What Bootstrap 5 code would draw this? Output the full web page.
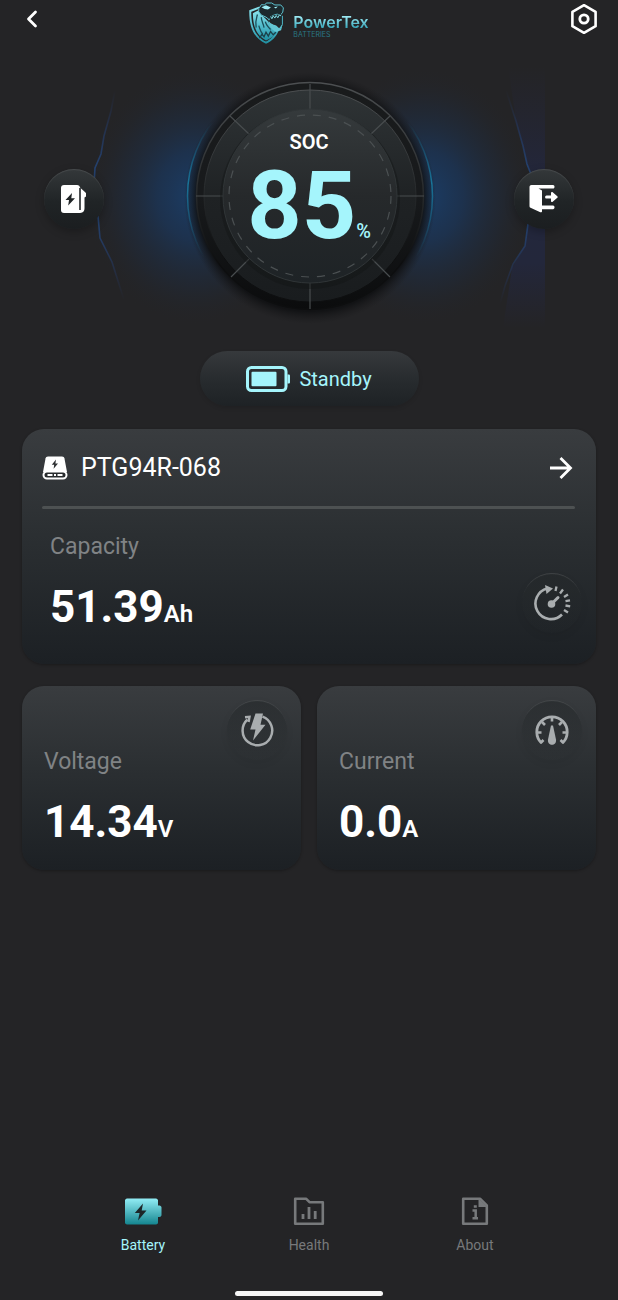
<!DOCTYPE html>
<html lang="en">
<head>
<meta charset="utf-8">
<meta name="viewport" content="width=device-width, initial-scale=1">
<title>PowerTex Batteries</title>
<link href="https://cdn.jsdelivr.net/npm/bootstrap@5.3.0/dist/css/bootstrap.min.css" rel="stylesheet">
<style>
  :root { --ice: #a5f5fc; --ink: #242426; --muted: #808385; }
  body { background: var(--ink); color: #fff; font-family: Roboto, "Noto Sans", sans-serif; }
  svg { display: block; }
  .plain { background: none; border: 0; padding: 0; color: inherit; }
  .topbar { padding: 0 12px 0 10px; height: 46px; }
  .topbar .plain { width: 44px; height: 38px; }
  .brand { padding-top: 2px; gap: 8px; color: #6cc9d6; text-decoration: none; }
  .brand-name { font: 600 16px/18px Inter, sans-serif; background: linear-gradient(#9be8f2 20%, #35a5b8 85%); -webkit-background-clip: text; background-clip: text; color: transparent; }
  .brand-sub { font: 400 7px/8px Inter, sans-serif; color: #2a7885; }
  .brand-words { padding-top: 11px; }

  .hero { height: 305px; padding: 0 44px; }
  .hero-art { position: absolute; top: 0; left: 50%; transform: translateX(-50%); z-index: -1; }
  .orb { width: 60px; height: 60px; border-radius: 50%; background: linear-gradient(#34383a, #202426 55%, #1b1e20); box-shadow: 0 3px 8px rgba(0,0,0,.25), inset 0 1px 1px rgba(255,255,255,.1); }
  .orb-soft { width: 60px; height: 60px; border-radius: 50%; flex: none; color: #a9adaf; background: linear-gradient(rgba(36,40,42,.6), rgba(36,40,42,.05)); box-shadow: inset 0 2px 1px -1px rgba(255,255,255,.13), 0 3px 8px rgba(0,0,0,.06); }
  .soc { align-self: flex-start; padding-top: 84px; }
  .soc-label { font-size: 20px; line-height: 24px; font-weight: 600; }
  .soc-value { font-size: 95px; line-height: 104px; font-weight: 700; color: var(--ice); }
  .soc-unit { font-size: 20px; font-weight: 500; color: var(--ice); }

  .status-pill { width: 219px; height: 55px; border-radius: 28px; gap: 9px; font-size: 20px; color: var(--ice); background: linear-gradient(#36393c, #282c2f 50%, #1e2225); box-shadow: 0 2px 4px rgba(0,0,0,.12); }

  .panels { padding: 23px 22px 0; }
  .panel { border-radius: 22px; background: linear-gradient(#393c3f, #2b2f32 45%, #1c2024); box-shadow: 0 1px 3px rgba(0,0,0,.3); }
  .panel-main { padding: 20px 14px 31px 20px; margin-bottom: 22px; }
  .device { height: 38px; padding-right: 7px; font-size: 25px; gap: 13px; }
  .rule { height: 3px; margin: 19px 7px 24px 0; background: #4d5152; border: 0; opacity: 1; border-radius: 2px; }
  .panel-body { padding-left: 8px; }
  .panel-grid { gap: 16px; }
  .panel-small { padding: 14px 14px 22px 22px; }
  .panel-small dl { padding-top: 48px; }
  dt { font-size: 23px; line-height: 28px; font-weight: 400; color: var(--muted); }
  dd { font-size: 44px; line-height: 52px; font-weight: 700; margin: 20px 0 0; }
  dd small { font-size: 24px; line-height: 1; font-weight: 600; }

  .tabs { padding: 0 60px; }
  .tabs a { color: #77797b; text-decoration: none; font-size: 14px; line-height: 20px; gap: 8px; }
  .tabs a.active { color: var(--ice); }
  .home-bar { width: 148px; height: 5px; border-radius: 3px; background: #f5f5f5; margin: 36px auto 4px; }
</style>
</head>
<body>
<div class="d-flex flex-column min-vh-100">
  <header class="topbar d-flex justify-content-between align-items-start">
    <button class="plain d-flex align-items-center justify-content-center" type="button" aria-label="Back">
      <svg width="12" height="18" viewBox="0 0 12 18" fill="none" stroke="#fff" stroke-width="2.8" stroke-linecap="round" stroke-linejoin="round"><path d="M9.500 2 2.500 9l7 7"/></svg>
    </button>
    <a class="brand d-flex" href="#" aria-label="PowerTex Batteries">
      <svg width="38" height="42" viewBox="26 6 112 128">
        <defs><linearGradient id="teal" x1="0" y1="0" x2="0" y2="1"><stop offset="0" stop-color="#8be3ed"/><stop offset=".6" stop-color="#49b5c6"/><stop offset="1" stop-color="#1f8fa1"/></linearGradient></defs>
        <path d="M31 31 62 20l-3 7-22 9c0 36 7 58 22 74 8 8 15 13 23 16 14-6 26-18 34-38l6 2c-8 22-22 36-40 43C46 117 30 84 31 31Z" fill="url(#teal)"/>
        <path d="M42 40 60 31c6 18 24 24 32 40 6 12 14 20 26 23-8 12-18 22-36 29-27-14-40-40-40-83Z" fill="url(#teal)"/>
        <path d="M56 44c-4 14-8 22-4 40M68 52c-2 10 6 18 8 32M60 78c4 10 4 18 12 26M80 66c2 8 8 16 16 24" fill="none" stroke="#1b4e59" stroke-width="4"/>
        <path d="m62 116 8-12 6 8 6-14 7 12 7-14 8 10 8-8" fill="none" stroke="#1b4049" stroke-width="4"/>
        <path d="m60 26 8-12 10 1 5-6 16 0 10 6 18 0 8 9-2 13-7 9-10-3-16 5-8 12-10-8-14-6-8-10Z" fill="#1c292d" stroke="#5cc3d1" stroke-width="3"/>
        <path d="m68 22 14-6 15 7-9 6-10-2Zm38 0 12-2-6 6Z" fill="#a0eef6"/>
        <path d="m92 53 10-6 26-4 4 14-4 24-12-6-16-6Z" fill="#1c2a2e"/>
        <path d="m96 50 4 7 4-9 5 7 4-8 5 7 4-8 6 2" fill="none" stroke="#83dce6" stroke-width="3"/>
        <path d="M88 58c4 14 14 16 26 20l8 8 10-12-4 18-14 5c-14-4-24-18-24-39Z" fill="#63c7d4"/>
        <path d="M132 48v26l-6 14" fill="none" stroke="#4fb6c5" stroke-width="3"/>
      </svg>
      <span class="brand-words d-flex flex-column"><span class="brand-name">PowerTex</span><span class="brand-sub">BATTERIES</span></span>
    </a>
    <button class="plain d-flex align-items-center justify-content-center" type="button" aria-label="Settings">
      <svg width="28" height="32" viewBox="0 0 28 32" fill="none" stroke="#fff"><path d="M14 2.200 25.600 8.800v14.400L14 29.800 2.400 23.200V8.800Z" stroke-width="2.600" stroke-linejoin="round"/><circle cx="14" cy="16" r="4.200" stroke-width="2.800"/></svg>
    </button>
  </header>

  <main class="flex-grow-1">
    <section class="hero position-relative z-0 overflow-hidden d-flex justify-content-between align-items-center" aria-label="State of charge">
      <svg class="hero-art" width="618" height="305" viewBox="0 0 618 305" aria-hidden="true">
        <defs>
          <radialGradient id="glow"><stop offset="0" stop-color="#1b3d66"/><stop offset=".35" stop-color="#1c3454" stop-opacity=".85"/><stop offset=".7" stop-color="#1f2b3d" stop-opacity=".45"/><stop offset="1" stop-color="#242426" stop-opacity="0"/></radialGradient>
          <radialGradient id="shade"><stop offset=".9" stop-color="#101113" stop-opacity=".9"/><stop offset="1" stop-color="#1a1a1c" stop-opacity="0"/></radialGradient>
          <linearGradient id="edge" x1="0" y1="0" x2="0" y2="1"><stop offset=".2" stop-color="#17688f" stop-opacity="0"/><stop offset=".45" stop-color="#18759a"/><stop offset=".75" stop-color="#17688f" stop-opacity="0"/></linearGradient>
          <linearGradient id="rim" x1="0" y1="0" x2="0" y2="1"><stop offset="0" stop-color="#4c4f51"/><stop offset=".5" stop-color="#26292b"/><stop offset=".8" stop-color="#0d0e0f"/></linearGradient>
          <linearGradient id="body" x1="0" y1="0" x2="0" y2="1"><stop offset="0" stop-color="#191b1c"/><stop offset=".5" stop-color="#181a1c"/><stop offset="1" stop-color="#0b0c0d"/></linearGradient>
          <linearGradient id="band" x1="0" y1="0" x2="0" y2="1"><stop offset="0" stop-color="#2f3436"/><stop offset=".5" stop-color="#1f2224"/><stop offset="1" stop-color="#191c1e"/></linearGradient>
          <linearGradient id="disc" x1="0" y1="0" x2="0" y2="1"><stop offset="0" stop-color="#353a3c"/><stop offset=".5" stop-color="#26292b"/><stop offset="1" stop-color="#1e2326"/></linearGradient>
          <linearGradient id="bolt" x1="0" y1="0" x2="0" y2="1"><stop offset="0" stop-color="#24386a" stop-opacity="0"/><stop offset=".35" stop-color="#24406c"/><stop offset=".65" stop-color="#24406c"/><stop offset="1" stop-color="#24386a" stop-opacity="0"/></linearGradient>
          <linearGradient id="haze" x1="0" y1="0" x2="0" y2="1"><stop offset="0" stop-color="#24263a" stop-opacity="0"/><stop offset=".45" stop-color="#23273d"/><stop offset=".75" stop-color="#23273b"/><stop offset="1" stop-color="#24263a" stop-opacity="0"/></linearGradient>
        </defs>
        <ellipse cx="196" cy="150" rx="112" ry="130" fill="url(#glow)"/>
        <ellipse cx="424" cy="150" rx="112" ry="130" fill="url(#glow)"/>
        <path d="M508 20 516 75l7 25 5 20 6 20v24l-6 14-3 22-13 22-9 60h42V20Z" fill="url(#haze)"/>
        <path d="M115 44 111 65 104 90 101 108 95 122 94 138 98 170 100 192 112 216 124 254" fill="none" stroke="url(#bolt)" stroke-width="1.600"/>
        <path d="M506 44 516 75 523 100 527 118 534 136V164L528 178 525 200 513 218 505 240 500 258" fill="none" stroke="url(#bolt)" stroke-width="1.600"/>
        <circle cx="310" cy="152" r="126" fill="url(#shade)"/>
        <circle cx="310" cy="150" r="122.500" fill="none" stroke="url(#edge)" stroke-width="1.500"/>
        <circle cx="310" cy="150" r="113.500" fill="url(#body)" stroke="url(#rim)" stroke-width="1.500"/>
        <circle cx="310" cy="150" r="106" fill="url(#band)" stroke="url(#rim)" stroke-width="1"/>
        <g stroke="#484c4e" stroke-width="1.200"><path d="M310 38v28M310 236v27M196 150h28M396 150h28M230 70l19 18M390 70l-19 18M231 231l18-18M390 231l-18-18"/></g>
        <circle cx="310" cy="153" r="90" fill="#111315" opacity=".4"/>
        <circle cx="310" cy="150" r="87" fill="url(#disc)" stroke="#303537" stroke-width="1"/>
        <circle cx="310" cy="150" r="81" fill="none" stroke="#4b5052" stroke-width="1.200" stroke-dasharray="8 8"/>
      </svg>
      <button class="plain orb d-flex align-items-center justify-content-center" type="button" aria-label="Charging">
        <svg width="28" height="30" viewBox="0 0 28 30"><path d="M4 1h13c1.700 0 3 1 3 3v25H4c-2 0-3-1-3-3V4c0-2 1-3 3-3Z" fill="#fff"/><path d="M20 3.500 26 9v3.500l-1.500 1V24c0 3-1 4.500-4.500 5" fill="#fff"/><path d="M20 4v22" stroke="#202426" stroke-width="1.600"/><path d="m12 9-6.500 7H9l-.8 5.500L15 14.300h-3.700Z" fill="#202426"/></svg>
      </button>
      <div class="soc text-center">
        <div class="soc-label">SOC</div>
        <div class="soc-value">85<span class="soc-unit">%</span></div>
      </div>
      <button class="plain orb d-flex align-items-center justify-content-center" type="button" aria-label="Discharging">
        <svg width="30" height="28" viewBox="0 0 30 28" fill="#fff"><path d="M2.500 0H24c2 0 2 3.600 0 3.600H9.500L13 5.400v15.200h11c2 0 2 3.700 0 3.700H13v2c0 1-.8 1.300-1.700.9L1.500 22.800C.9 22.500.5 22 .5 21.300V2C.5.800 1.300 0 2.500 0Z"/><path d="M17.500 10.400H22V8c0-1 1-1.400 1.700-.8l4.600 4c.6.500.6 1.100 0 1.600l-4.600 4c-.7.600-1.700.2-1.700-.8v-2.400h-4.500c-1.800 0-1.800-3.200 0-3.200Z"/></svg>
      </button>
    </section>

    <div class="status-pill d-flex align-items-center justify-content-center mx-auto" role="status">
      <svg width="44" height="26" viewBox="0 0 44 26" fill="none"><rect x="1.500" y="1.500" width="38.500" height="23" rx="4" stroke="#a5f5fc" stroke-width="3"/><path d="M41.500 8.500h1.200c.8 0 1.300.5 1.300 1.300v6.400c0 .8-.5 1.300-1.300 1.300h-1.200Z" fill="#a5f5fc"/><rect x="5.500" y="5.800" width="25" height="14.400" rx="1" fill="#a5f5fc"/></svg>
      <span>Standby</span>
    </div>

    <div class="panels">
      <section class="panel panel-main">
        <a class="device d-flex align-items-center text-white text-decoration-none" href="#">
          <svg width="26" height="24" viewBox="0 0 26 24"><path d="M6 .5h14c1.400 0 2.200.8 2.500 2L25 16H1L3.500 2.500C3.800 1.300 4.600.5 6 .5Z" fill="#fff"/><rect x="1.500" y="15.500" width="23" height="7" rx="3.500" fill="#292c2e" stroke="#fff" stroke-width="2"/><path d="M5.500 19h5m1.500 0h2m1.500 0h5" stroke="#fff" stroke-width="1.800"/><path d="m14 3.500-4.200 5.300h2.400l-.6 4 4.400-5.400h-2.600Z" fill="#2d3032"/></svg>
          <span>PTG94R-068</span>
          <svg class="ms-auto" width="28" height="24" viewBox="0 0 28 24" fill="none" stroke="#fff" stroke-width="2.800"><path d="M3 12h20M13.500 2 23.500 12l-10 10"/></svg>
        </a>
        <hr class="rule">
        <div class="panel-body d-flex justify-content-between align-items-end">
          <dl class="mb-0"><dt>Capacity</dt><dd>51.39<small>Ah</small></dd></dl>
          <span class="orb-soft d-flex align-items-center justify-content-center">
            <svg width="38" height="38" viewBox="0 0 38 38" fill="none" stroke="currentColor"><path d="M14.500 4.500A15.500 15.500 0 1 0 29 30.500" stroke-width="2.600"/><path d="m12 1 8 3.500-6.500 5.500Z" fill="currentColor" stroke="none"/><path d="m22.500 7 1-4.500M27 9.500l3-4M31 13l4-2.500M32.500 17.200l4.500-.8M32.500 21.500l4.700.8M31 26l4 2.500" stroke-width="2.300"/><circle cx="18.500" cy="20" r="3.800" fill="currentColor" stroke="none"/><path d="m19 19.500 6-6" stroke-width="3" stroke-linecap="round"/></svg>
          </span>
        </div>
      </section>

      <div class="panel-grid d-flex">
        <section class="panel panel-small d-flex justify-content-between align-items-start flex-fill w-50">
          <dl class="mb-0"><dt>Voltage</dt><dd>14.34<small>V</small></dd></dl>
          <span class="orb-soft d-flex align-items-center justify-content-center">
            <svg width="34" height="34" viewBox="0 0 34 34"><path d="M7.500 6.500A14.800 14.800 0 1 0 22.500 3.600" fill="none" stroke="currentColor" stroke-width="2.500"/><path d="M5 4.200 9.500 3.800 8.600 9" fill="none" stroke="currentColor" stroke-width="2.400"/><path d="M15.500.5H23l-2.500 11.200h5L13 27.500l2.500-11h-5.300Z" fill="currentColor"/></svg>
          </span>
        </section>
        <section class="panel panel-small d-flex justify-content-between align-items-start flex-fill w-50">
          <dl class="mb-0"><dt>Current</dt><dd>0.0<small>A</small></dd></dl>
          <span class="orb-soft d-flex align-items-center justify-content-center">
            <svg width="36" height="34" viewBox="0 0 36 34" fill="none" stroke="currentColor"><path d="M7.500 30A15.200 15.200 0 1 1 28.500 30" stroke-width="2.800"/><path d="M18 4v4.500M8 9l3 3M28 9l-3 3M3 19.500h4.500M33 19.500h-4.500M6.500 30l3-3M29.500 30l-3-3" stroke-width="2.600"/><path d="M17 12.500h2l3 14c1 7-9 7-8 0Z" fill="currentColor" stroke="none"/></svg>
          </span>
        </section>
      </div>
    </div>
  </main>

  <nav aria-label="Main">
    <div class="tabs d-flex">
      <a class="active d-flex flex-column align-items-center flex-fill w-100" href="#" aria-current="page">
        <svg width="38" height="30" viewBox="0 0 38 30"><defs><linearGradient id="cell" x1="0" y1="0" x2="0" y2="1"><stop offset="0" stop-color="#92edf5"/><stop offset="1" stop-color="#14858f"/></linearGradient></defs><path d="M3 1.500h29c1 0 2 1 2 2v5h1.500c1 0 2 1 2 2v7.500c0 1-1 2-2 2H34v5.500c0 1-1 2-2 2H3c-1 0-2-1-2-2v-22c0-1 1-2 2-2Z" fill="url(#cell)"/><path d="m19 6.500-8.200 9.500h4.800L14 23.500l8.500-10h-4.800Z" fill="#1d2628"/></svg>
        <span>Battery</span>
      </a>
      <a class="d-flex flex-column align-items-center flex-fill w-100" href="#">
        <svg width="32" height="30" viewBox="0 0 32 30" fill="none" stroke="currentColor"><path d="M2.200 1.700H13L16.500 5.200h13.300v21.500H2.200Z" stroke-width="2.600" stroke-linejoin="round"/><path d="M10 17v5M16 10v12M22.200 14v8" stroke-width="2.800"/></svg>
        <span>Health</span>
      </a>
      <a class="d-flex flex-column align-items-center flex-fill w-100" href="#">
        <svg width="28" height="30" viewBox="0 0 28 30" fill="none" stroke="currentColor"><path d="M2.200 1.700H19l6.800 6.800v18.200H2.200Z" stroke-width="2.600" stroke-linejoin="round"/><path d="M17.500 1.500V10H26Z" fill="currentColor" stroke="none"/><path d="M11.500 13.500h3.200v8M11.500 21.200h5.500M12.800 9.500h3" stroke-width="2.500"/></svg>
        <span>About</span>
      </a>
    </div>
    <div class="home-bar"></div>
  </nav>
</div>
<script src="https://cdn.jsdelivr.net/npm/bootstrap@5.3.0/dist/js/bootstrap.bundle.min.js"></script>
</body>
</html>
